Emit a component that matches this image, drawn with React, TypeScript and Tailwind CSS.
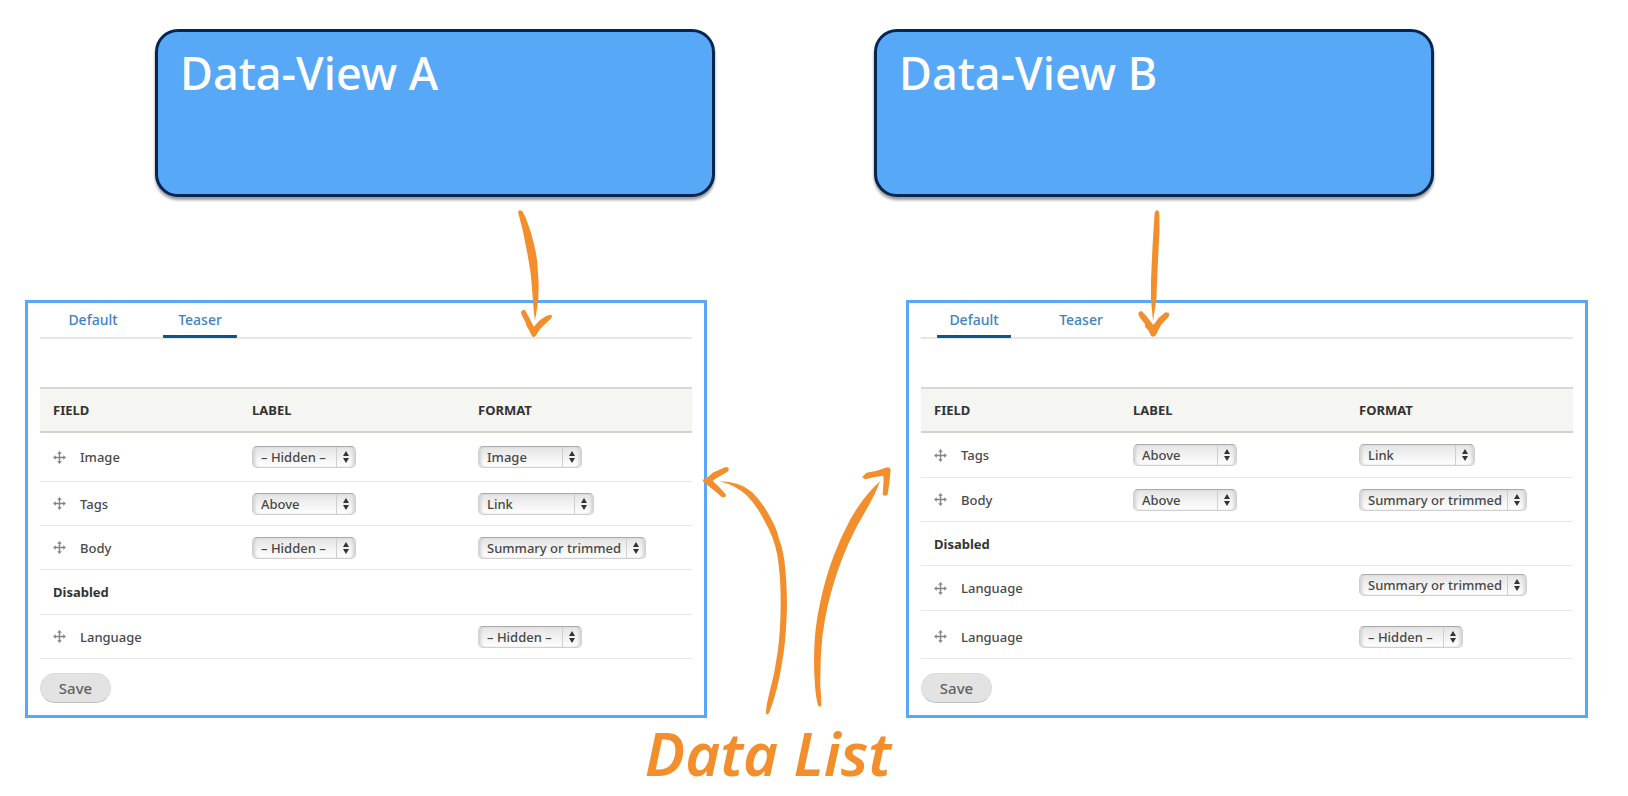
import React from "react";

type Choice = { value: string; width: string };
type FieldRow = {
  name: string;
  height: string;
  heading?: boolean;
  label?: Choice;
  format?: Choice;
  pad?: string;
  formatPad?: string;
};

const hidden: Choice = { value: "– Hidden –", width: "w-[104px]" };
const above: Choice = { value: "Above", width: "w-[104px]" };
const image: Choice = { value: "Image", width: "w-[104px]" };
const link: Choice = { value: "Link", width: "w-[116px]" };
const summary: Choice = { value: "Summary or trimmed", width: "w-[168px]" };

const teaserRows: FieldRow[] = [
  { name: "Image", height: "h-[49px]", label: hidden, format: image },
  { name: "Tags", height: "h-[44px]", label: above, format: link },
  { name: "Body", height: "h-[44px]", label: hidden, format: summary },
  { name: "Disabled", height: "h-[45px]", heading: true },
  { name: "Language", height: "h-[44px]", format: hidden },
];

const defaultRows: FieldRow[] = [
  { name: "Tags", height: "h-[45px]", label: above, format: link },
  { name: "Body", height: "h-[44px]", label: above, format: summary },
  { name: "Disabled", height: "h-[44px]", heading: true },
  { name: "Language", height: "h-[45px]", format: summary, formatPad: "pb-[6px]" },
  { name: "Language", height: "h-[48px]", format: hidden, pad: "pt-[4px]", formatPad: "pt-[4px]" },
];

function MoveIcon() {
  return (
    <svg viewBox="0 0 13 13" className="size-[13px] shrink-0" fill="#858585" aria-hidden="true">
      <path d="M5.8 2h1.4v3.8H11v1.4H7.2V11H5.8V7.2H2V5.8h3.8z" />
      <path d="M6.5 0 8.8 2.8H4.2zM6.5 13 4.2 10.2h4.6zM0 6.5 2.8 4.2v4.6zM13 6.5 10.2 8.8V4.2z" />
    </svg>
  );
}

function Picker({ choice, label }: { choice: Choice; label: string }) {
  return (
    <span className={"relative block h-[22px] " + choice.width}>
      <select
        aria-label={label}
        defaultValue={choice.value}
        className="block h-full w-full appearance-none rounded-[5px] border border-[#d0d0d0] border-t-[#a9a9a9] bg-linear-to-b from-[#e4e4e4] to-white pl-[8px] text-[13px] leading-[18px] font-medium text-[#484848] shadow-[inset_3px_0_3px_-1px_#d2d2d2,inset_-3px_0_3px_-1px_#d2d2d2]"
      >
        <option>{choice.value}</option>
      </select>
      <svg viewBox="0 0 20 22" className="pointer-events-none absolute top-0 right-0 h-[22px] w-[20px]" aria-hidden="true">
        <path d="M0 1h1v20H0z" fill="#cfcfcf" />
        <path d="M10 5 13 10H7zM10 17 7 12h6z" fill="#333" />
      </svg>
    </span>
  );
}

function Panel({ title, active, rows }: { title: string; active: string; rows: FieldRow[] }) {
  return (
    <section aria-label={title} className="border-3 border-[#57a8f7] px-[12px] pb-[12px]">
      <nav className="flex h-[36px] gap-[33px] border-b-2 border-[#e6e6e6] pl-[16px] text-[14px] leading-[20px] font-medium">
        {["Default", "Teaser"].map((tab) => (
          <a
            key={tab}
            href="#"
            className={
              "flex h-[35px] w-[74px] justify-center border-b-3 pt-[7px] text-[#3d83bf] " +
              (tab === active ? "rounded-b-[1px] border-[#0f5688]" : "border-transparent")
            }
          >
            {tab}
          </a>
        ))}
      </nav>
      <table className="mt-[48px] w-full table-fixed border-separate border-spacing-0 text-left text-[13px] leading-[18px] font-medium text-[#4a4a4a]">
        <thead>
          <tr className="bg-[#f5f5f1] text-[#333]">
            <th className="h-[46px] w-[199px] border-t-2 border-b-2 border-t-[#d8d8d6] border-b-[#d3d3cc] pl-[13px] font-bold">FIELD</th>
            <th className="w-[226px] border-t-2 border-b-2 border-t-[#d8d8d6] border-b-[#d3d3cc] pl-[13px] font-bold">LABEL</th>
            <th className="border-t-2 border-b-2 border-t-[#d8d8d6] border-b-[#d3d3cc] pl-[13px] font-bold">FORMAT</th>
          </tr>
        </thead>
        <tbody>
          {rows.map((row, i) =>
            row.heading ? (
              <tr key={i}>
                <th colSpan={3} className={"border-b border-[#e6e6e2] pl-[13px] font-bold text-[#333] " + row.height}>
                  {row.name}
                </th>
              </tr>
            ) : (
              <tr key={i}>
                <td className={"border-b border-[#e6e6e2] pl-[13px] " + row.height + " " + (row.pad ?? "")}>
                  <div className="flex items-center gap-[14px]">
                    <MoveIcon />
                    {row.name}
                  </div>
                </td>
                <td className="border-b border-[#e6e6e2] pl-[13px]">
                  {row.label && <Picker choice={row.label} label={row.name + " label"} />}
                </td>
                <td className={"border-b border-[#e6e6e2] pl-[13px] " + (row.formatPad ?? "")}>
                  {row.format && <Picker choice={row.format} label={row.name + " format"} />}
                </td>
              </tr>
            ),
          )}
        </tbody>
      </table>
      <button
        type="button"
        className="mt-[14px] flex h-[30px] w-[71px] items-center justify-center rounded-full border border-[#dcdcdc] border-b-[#bdbdbd] bg-[#e3e3e3] text-[15px] leading-[20px] font-medium text-[#626262]"
      >
        Save
      </button>
    </section>
  );
}

function ViewBox({ children }: { children: React.ReactNode }) {
  return (
    <div className="h-[168px] rounded-[23px] border-3 border-[#02264f] bg-[#57a8f7] pt-[13px] pl-[22px] shadow-[0_3px_3px_rgba(0,0,0,0.4)]">
      <h2 className="text-[45px] leading-[56px] font-medium text-white">{children}</h2>
    </div>
  );
}

function Arrows() {
  return (
    <svg
      viewBox="0 0 1628 796"
      preserveAspectRatio="none"
      className="pointer-events-none absolute top-0 left-0 h-[796px] w-full"
      fill="#f28f2c"
      aria-hidden="true"
    >
      <g transform="translate(490 200) scale(0.3333)">
        <path d="M84 36Q87 26 98 35Q108 52 115 75Q124 98 130 125Q139 156 142 190L146 250L145 300L139 338L135 362L131 330L128 290L122 220L112 160L98 90Z" />
        <path d="M93 340Q93 328 105 330L118 354L131 380L150 360L170 347L184 344Q188 348 184 355L168 370L150 387L137 408Q131 413 126 409L118 392L110 378L106 366Z" />
      </g>
      <path d="M1154.6 213Q1157 207 1159.3 213L1159.5 230L1157.7 267L1156.3 300L1153 321L1151 300V280L1152.5 247Z" />
      <g transform="translate(890 290) scale(0.3333)">
        <path d="M745 72Q746 62 756 64L774 84L790 105L806 84L826 67L836 68Q840 73 836 80L813 105L798 135Q790 144 783 137L776 122L765 110V102L748 80Z" />
      </g>
      <g transform="translate(400 290) scale(0.3333)">
        <path d="M908 573Q910 565 925 560L938 548L975 532Q984 529 987 538L983 545L955 561L938 572L958 592L977 612Q979 620 975 622L965 621L948 606L930 592Z" />
        <path d="M958 574Q1020 575 1056 606Q1090 640 1112 684Q1131 717 1137 746Q1153 785 1157 850Q1163 930 1160 980Q1157 1060 1146 1120Q1134 1200 1108 1268Q1103 1277 1098 1271Q1098 1250 1106 1218Q1125 1150 1134 1080Q1142 1010 1142 950Q1143 860 1132 795Q1122 742 1094 694Q1070 646 1040 616Q1005 585 958 574Z" />
      </g>
      <g transform="translate(760 440) scale(0.3333)">
        <path d="M307 110L320 98L350 92L382 82Q391 80 392 90L388 130L383 164Q375 170 368 164L371 120L370 107L340 112L320 117Q309 117 307 110Z" />
        <path d="M360 124Q343 139 325 160Q295 195 270 240Q242 292 220 350Q195 416 180 490Q165 560 163 620Q161 680 164 720Q167 777 175 797Q182 803 184 795Q184 770 181 740Q180 660 187 590Q194 536 205 490Q222 420 245 360Q265 307 290 260Q310 225 330 190Q348 158 360 124Z" />
      </g>
    </svg>
  );
}

export default function App() {
  return (
    <main className="relative bg-white font-['Noto_Sans','Open_Sans',sans-serif]">
      <div className="grid grid-cols-2 gap-[159px] pt-[29px] pr-[194px] pl-[155px]">
        <ViewBox>Data-View A</ViewBox>
        <ViewBox>Data-View B</ViewBox>
      </div>
      <div className="mt-[103px] grid grid-cols-2 gap-[199px] pr-[40px] pl-[25px]">
        <Panel title="Data-View A fields" active="Teaser" rows={teaserRows} />
        <Panel title="Data-View B fields" active="Default" rows={defaultRows} />
      </div>
      <p className="pr-[92px] text-center text-[60px] leading-[70px] font-semibold text-[#f28f2c] italic">
        Data List
      </p>
      <Arrows />
    </main>
  );
}
